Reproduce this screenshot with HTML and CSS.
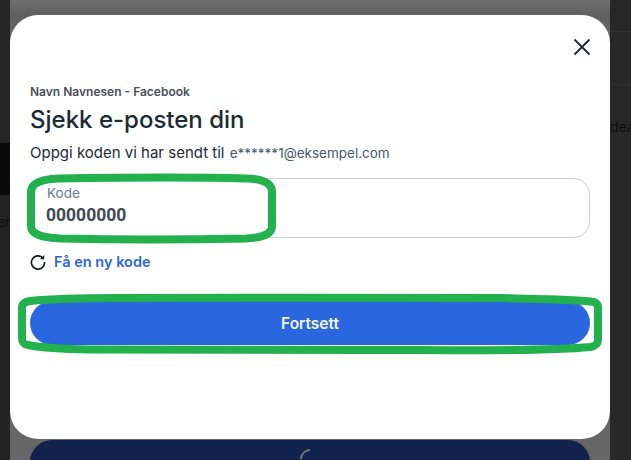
FILE: index.html
```html
<!DOCTYPE html>
<html>

<head>
  <title>Sjekk e-posten din</title>
  <link rel="stylesheet" href="styles.css">
</head>

<body>
  <div class="page">
    <!-- dimmed page behind the dialog -->
    <div class="side side-left">
      <div class="left-top"></div>
      <div class="left-dark"></div>
      <div class="left-rest"><span class="back-text back-text-left">er</span></div>
    </div>

    <div class="sheet">
      <div class="modal">
        <div class="modal-top">
          <button class="close-btn" aria-label="Lukk">
            <svg viewBox="0 0 18 18" width="18" height="18">
              <path d="M1.5 1.5l15 15M16.5 1.5l-15 15"></path>
            </svg>
          </button>
        </div>

        <div class="account">Navn Navnesen - Facebook</div>
        <h1>Sjekk e-posten din</h1>
        <p class="hint">Oppgi koden vi har sendt til <span class="email">e******1@eksempel.com</span></p>

        <div class="field">
          <label for="code">Kode</label>
          <input id="code" type="text" value="00000000">
        </div>

        <a class="resend" href="#">
          <svg viewBox="0 0 16 16" width="16" height="16">
            <path d="M13.2 4.4A6.6 6.6 0 1 0 14.6 8"></path>
            <path class="resend-tip" d="M14.2 1v4.2H10z"></path>
          </svg>
          <span>Få en ny kode</span>
        </a>

        <button class="submit">Fortsett</button>
      </div>
      <div class="back-button"><span class="spinner"></span></div>
    </div>

    <div class="side side-right">
      <div class="right-row right-row-first"></div>
      <div class="right-row right-row-second"></div>
      <div class="right-rest"><span class="back-text">dea</span></div>
    </div>
  </div>

  <!-- Green marks drawn on top of the screenshot -->
  <svg class="marks" viewBox="0 0 631 460" width="631" height="460">
    <path d="M60 178.5C120 177.5 210 177.5 246 178.5C262 179 272 183 272 192V226C272 234 264 237.5 246 238.5C190 239.5 110 239.5 60 238.5C40 237.5 31 234 31 226V192C31 183 42 179 60 178.5Z"></path>
    <path d="M116 298C220 297.500 420 297.500 500 298C550 299 585 300 594 302C597 303 598 305 598 308V340C598 344 596 346 590 347C560 350 480 350.500 420 350C300 350 170 350 90 349.500C60 349 38 347 28 345C23 344 22 342 22 338V307C22 304 24 302 30 301C50 299 85 298 116 298Z"></path>
  </svg>
</body>

</html>
```

FILE: styles.css
```css
/* Reset */
html,
body {
  margin: 0;
  height: 100%;
  overflow: hidden;
}

body {
  font-family: "Inter", "Roboto", Arial, sans-serif;
  color: #1c2b33;
  background-color: #262626;
}

/* Page behind the dialog */
.page {
  display: flex;
  width: 631px;
  height: 460px;
  overflow: hidden;
}

.side {
  display: flex;
  flex-direction: column;
  flex: none;
  overflow: hidden;
}

.side-left {
  width: 10px;
}

.side-right {
  width: 21px;
}

.left-top {
  height: 143px;
  background-color: #252525;
}

.left-dark {
  height: 52px;
  background-color: #0a0a0a;
}

.left-rest {
  flex: 1;
  padding-top: 17px;
  background-color: #232323;
  direction: rtl;
}

.right-row {
  border-bottom: 1px solid #2f2f2f;
  background-color: #272727;
}

.right-row-first {
  height: 31px;
}

.right-row-second {
  height: 52px;
}

.right-rest {
  flex: 1;
  padding-top: 32px;
  background-color: #282828;
}

.back-text {
  display: block;
  width: 30px;
  font-size: 14px;
  line-height: 20px;
  color: #0e0e0e;
}

.back-text-left {
  text-align: right;
  direction: ltr;
}

/* Grey panel that the dialog sits on */
.sheet {
  flex: none;
  width: 600px;
  padding-top: 15px;
  box-sizing: border-box;
  background-color: #666;
  background-image: linear-gradient(#707070, #5f5f5f 15px, #666 30px);
}

/* Dialog */
.modal {
  height: 424px;
  padding: 0 20px;
  box-sizing: border-box;
  border-radius: 28px;
  background-color: #fff;
}

.modal-top {
  display: flex;
  justify-content: flex-end;
  height: 70px;
  padding-top: 23px;
  box-sizing: border-box;
}

.close-btn {
  width: 18px;
  height: 18px;
  margin-right: -1px;
  padding: 0;
  border: 0;
  background: none;
}

.close-btn svg {
  display: block;
  fill: none;
  stroke: #1c2b33;
  stroke-width: 1.8;
}

.account {
  font-size: 12px;
  font-weight: 600;
  line-height: 14px;
  color: #4b4f56;
}

h1 {
  margin: 6px 0 0;
  font-size: 24px;
  font-weight: 500;
  line-height: 30px;
  color: #1c2b33;
}

.hint {
  margin: 9px 0 0;
  font-size: 15px;
  line-height: 18px;
}

.email {
  margin-left: 1px;
  font-size: 13.5px;
  color: #465a69;
}

/* Code field */
.field {
  display: flex;
  flex-direction: column;
  height: 60px;
  margin-top: 16px;
  padding: 6px 16px 0;
  box-sizing: border-box;
  border: 1px solid #ced0d4;
  border-radius: 16px;
}

.field label {
  font-size: 13.5px;
  line-height: 16px;
  color: #6b7b88;
}

.field input {
  margin: 3px 0 0 -1px;
  padding: 0;
  border: 0;
  outline: 0;
  font-family: "Roboto", Arial, sans-serif;
  font-size: 17.5px;
  font-weight: 700;
  line-height: 22px;
  color: #444950;
}

/* Resend link */
.resend {
  display: flex;
  align-items: center;
  gap: 8px;
  margin-top: 15px;
  font-size: 14.5px;
  font-weight: 600;
  line-height: 18px;
  color: #2a66de;
  text-decoration: none;
}

.resend svg {
  fill: none;
  stroke: #14181c;
  stroke-width: 1.6;
}

.resend .resend-tip {
  fill: #14181c;
  stroke: none;
}

/* Main button */
.submit {
  display: block;
  width: 100%;
  height: 44px;
  margin-top: 30px;
  border: 0;
  border-radius: 22px;
  background-color: #2a66de;
  font-family: inherit;
  font-size: 15.5px;
  font-weight: 600;
  color: #f0f4fc;
}

/* Button of the page behind */
.back-button {
  display: flex;
  justify-content: center;
  height: 44px;
  margin: 1px 20px 0;
  border-radius: 22px 22px 0 0;
  background-color: #11224d;
}

.spinner {
  width: 20px;
  height: 20px;
  margin-top: 9px;
  box-sizing: border-box;
  border: 2px solid transparent;
  border-top-color: #777;
  border-radius: 50%;
  transform: rotate(-45deg);
}

/* Green hand drawn rings */
.marks {
  position: absolute;
  top: 0;
  left: 0;
  pointer-events: none;
}

.marks path {
  fill: none;
  stroke: #22b14c;
  stroke-width: 8;
}
```
